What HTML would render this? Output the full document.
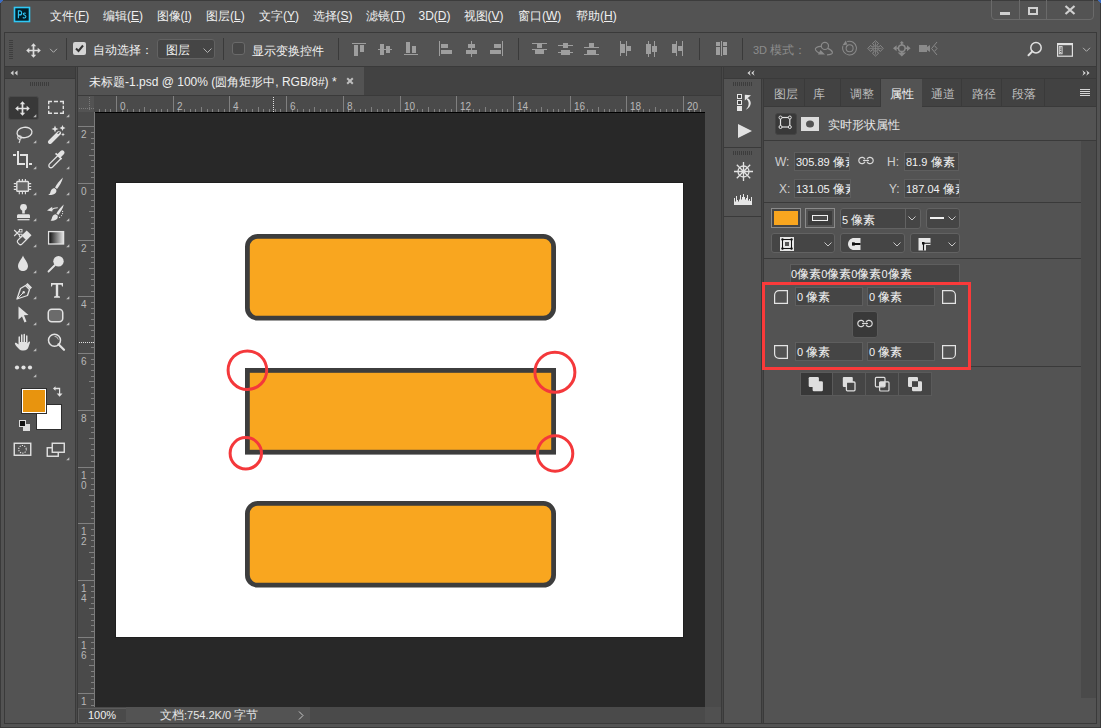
<!DOCTYPE html><html><head><meta charset="utf-8"><style>
html,body{margin:0;padding:0;width:1101px;height:728px;overflow:hidden;background:#535353;}
body{position:relative;font-family:"Liberation Sans",sans-serif;font-size:12px;color:#e6e6e6;}
.t{position:absolute;white-space:nowrap;line-height:14px;}
u{text-decoration:underline;text-underline-offset:1px;}
</style></head><body>
<div style="position:absolute;left:0px;top:0px;width:1101px;height:728px;background:#535353;"></div>
<div style="position:absolute;left:0px;top:0px;width:1px;height:728px;background:#3a3a3a;"></div>
<div style="position:absolute;left:1100px;top:0px;width:1px;height:728px;background:#3a3a3a;"></div>
<div style="position:absolute;left:0px;top:727px;width:1101px;height:1px;background:#3a3a3a;"></div>
<div style="position:absolute;left:0px;top:0px;width:1101px;height:1px;background:#3c3c3c;"></div>
<div style="position:absolute;left:0px;top:0px;width:3px;height:1px;background:#3b6cc2;"></div>
<div style="position:absolute;left:0px;top:1px;width:2px;height:1px;background:#3b6cc2;"></div>
<div style="position:absolute;left:0px;top:2px;width:1px;height:1px;background:#3b6cc2;"></div>
<div style="position:absolute;left:1098px;top:0px;width:3px;height:1px;background:#3b6cc2;"></div>
<div style="position:absolute;left:1099px;top:1px;width:2px;height:1px;background:#3b6cc2;"></div>
<div style="position:absolute;left:1100px;top:2px;width:1px;height:1px;background:#3b6cc2;"></div>
<div style="position:absolute;left:4px;top:32px;width:1093px;height:1px;background:#3a3a3a;"></div>
<div style="position:absolute;left:4px;top:32px;width:1px;height:34px;background:#3a3a3a;"></div>
<div style="position:absolute;left:1096px;top:32px;width:1px;height:34px;background:#3a3a3a;"></div>
<div style="position:absolute;left:4px;top:66px;width:1093px;height:1px;background:#3a3a3a;"></div>
<svg style="position:absolute;left:13px;top:6px;" width="18" height="17" viewBox="0 0 18 17"><rect x="1.5" y="1.5" width="15" height="14" fill="#001e28" stroke="#2fc8f6" stroke-width="1.6"/><path d="M5.4 12.2 V4.9 H6.9 C8.2 4.9 8.7 5.8 8.7 6.9 C8.7 8.1 8 8.9 6.8 8.9 H5.4" fill="none" stroke="#2fc8f6" stroke-width="1.1"/><path d="M12.8 7.3 C12.4 7 12 6.9 11.5 6.9 C10.7 6.9 10.3 7.3 10.3 7.9 C10.3 9 12.9 9 12.9 10.5 C12.9 11.5 12.1 12 11.3 12 C10.7 12 10.2 11.8 9.8 11.5" fill="none" stroke="#2fc8f6" stroke-width="1.05"/></svg>
<div class="t" style="left:50px;top:9px;color:#f0f0f0;">文件(<u>F</u>)</div>
<div class="t" style="left:103px;top:9px;color:#f0f0f0;">编辑(<u>E</u>)</div>
<div class="t" style="left:156.5px;top:9px;color:#f0f0f0;">图像(<u>I</u>)</div>
<div class="t" style="left:206px;top:9px;color:#f0f0f0;">图层(<u>L</u>)</div>
<div class="t" style="left:259px;top:9px;color:#f0f0f0;">文字(<u>Y</u>)</div>
<div class="t" style="left:312.5px;top:9px;color:#f0f0f0;">选择(<u>S</u>)</div>
<div class="t" style="left:366px;top:9px;color:#f0f0f0;">滤镜(<u>T</u>)</div>
<div class="t" style="left:418.5px;top:9px;color:#f0f0f0;">3D(<u>D</u>)</div>
<div class="t" style="left:463.5px;top:9px;color:#f0f0f0;">视图(<u>V</u>)</div>
<div class="t" style="left:518px;top:9px;color:#f0f0f0;">窗口(<u>W</u>)</div>
<div class="t" style="left:576px;top:9px;color:#f0f0f0;">帮助(<u>H</u>)</div>
<div style="position:absolute;left:991px;top:-4px;width:103px;height:24px;border:1px solid #6a6a6a;border-radius:4px;box-sizing:border-box;"></div>
<div style="position:absolute;left:1019px;top:0px;width:1px;height:20px;background:#6a6a6a;"></div>
<div style="position:absolute;left:1046px;top:0px;width:1px;height:20px;background:#6a6a6a;"></div>
<div style="position:absolute;left:1000px;top:12px;width:10px;height:3px;background:#d0d0d0;"></div>
<div style="position:absolute;left:1028px;top:7px;width:10px;height:8px;border:2px solid #d0d0d0;box-sizing:border-box;"></div>
<svg style="position:absolute;left:1064px;top:5px;" width="12" height="10" viewBox="0 0 12 10"><path d="M1.5 1 L10.5 9 M10.5 1 L1.5 9" stroke="#d0d0d0" stroke-width="2.2"/></svg>
<div style="position:absolute;left:9px;top:40px;width:4px;height:1px;background:#3e3e3e;"></div>
<div style="position:absolute;left:9px;top:42px;width:4px;height:1px;background:#3e3e3e;"></div>
<div style="position:absolute;left:9px;top:44px;width:4px;height:1px;background:#3e3e3e;"></div>
<div style="position:absolute;left:9px;top:46px;width:4px;height:1px;background:#3e3e3e;"></div>
<div style="position:absolute;left:9px;top:48px;width:4px;height:1px;background:#3e3e3e;"></div>
<div style="position:absolute;left:9px;top:50px;width:4px;height:1px;background:#3e3e3e;"></div>
<div style="position:absolute;left:9px;top:52px;width:4px;height:1px;background:#3e3e3e;"></div>
<div style="position:absolute;left:9px;top:54px;width:4px;height:1px;background:#3e3e3e;"></div>
<div style="position:absolute;left:9px;top:56px;width:4px;height:1px;background:#3e3e3e;"></div>
<div style="position:absolute;left:9px;top:58px;width:4px;height:1px;background:#3e3e3e;"></div>
<svg style="position:absolute;left:26px;top:43px;" width="15" height="15" viewBox="0 0 15 15"><path d="M7.5 2.5 V12.5 M2.5 7.5 H12.5" stroke="#dcdcdc" stroke-width="1.7"/><path d="M7.5 0.2 L10.2 3.3 L4.8 3.3 Z M7.5 14.8 L10.2 11.7 L4.8 11.7 Z M0.2 7.5 L3.3 4.8 L3.3 10.2 Z M14.8 7.5 L11.7 4.8 L11.7 10.2 Z" fill="#dcdcdc"/></svg>
<svg style="position:absolute;left:49px;top:48px;" width="9" height="6" viewBox="0 0 9 6"><path d="M1 0.8 L4.5 4.3 L8 0.8" fill="none" stroke="#b0b0b0" stroke-width="1"/></svg>
<div style="position:absolute;left:66px;top:38px;width:1px;height:22px;background:#3a3a3a;"></div>
<div style="position:absolute;left:73px;top:42px;width:13px;height:13px;background:#d4d4d4;border-radius:2px;"></div>
<svg style="position:absolute;left:73px;top:42px;" width="13" height="13" viewBox="0 0 13 13"><path d="M3 6.5 L5.5 9 L10 3.5" fill="none" stroke="#333" stroke-width="2"/></svg>
<div class="t" style="left:93px;top:43px;color:#f0f0f0;">自动选择：</div>
<div style="position:absolute;left:157px;top:39px;width:58px;height:20px;background:#454545;border:1px solid #626262;border-radius:3px;box-sizing:border-box;"></div>
<div class="t" style="left:166px;top:43px;color:#f0f0f0;">图层</div>
<svg style="position:absolute;left:203px;top:48px;" width="9" height="6" viewBox="0 0 9 6"><path d="M0.5 0.5 L4.5 4.5 L8.5 0.5" fill="none" stroke="#b0b0b0" stroke-width="1"/></svg>
<div style="position:absolute;left:223px;top:38px;width:1px;height:22px;background:#3a3a3a;"></div>
<div style="position:absolute;left:232px;top:42px;width:13px;height:13px;border:1px solid #6a6a6a;background:#474747;border-radius:3px;box-sizing:border-box;"></div>
<div class="t" style="left:252px;top:44px;color:#f0f0f0;">显示变换控件</div>
<div style="position:absolute;left:338px;top:38px;width:1px;height:22px;background:#3a3a3a;"></div>
<svg style="position:absolute;left:0;top:0" width="1101" height="70"><rect x="352" y="43" width="14" height="1" fill="#9e9e9e"/><rect x="354" y="45" width="4" height="11" fill="#9e9e9e"/><rect x="360" y="45" width="4" height="7" fill="#9e9e9e"/><rect x="378" y="49" width="14" height="1" fill="#9e9e9e"/><rect x="380" y="44" width="4" height="11" fill="#9e9e9e"/><rect x="386" y="46" width="4" height="7" fill="#9e9e9e"/><rect x="404" y="54" width="14" height="1" fill="#9e9e9e"/><rect x="406" y="42" width="4" height="11" fill="#9e9e9e"/><rect x="412" y="46" width="4" height="7" fill="#9e9e9e"/><rect x="439" y="41" width="1" height="15" fill="#9e9e9e"/><rect x="441" y="44" width="7" height="4" fill="#9e9e9e"/><rect x="441" y="50" width="11" height="4" fill="#9e9e9e"/><rect x="471" y="41" width="1" height="16" fill="#9e9e9e"/><rect x="468" y="44" width="7" height="4" fill="#9e9e9e"/><rect x="466" y="50" width="11" height="4" fill="#9e9e9e"/><rect x="502" y="41" width="1" height="15" fill="#9e9e9e"/><rect x="494" y="44" width="7" height="4" fill="#9e9e9e"/><rect x="490" y="50" width="11" height="4" fill="#9e9e9e"/><rect x="518" y="38" width="1" height="22" fill="#3a3a3a"/><rect x="532" y="43" width="15" height="1" fill="#9e9e9e"/><rect x="537" y="44" width="5" height="4" fill="#9e9e9e"/><rect x="532" y="49" width="15" height="1" fill="#9e9e9e"/><rect x="535" y="50" width="9" height="4" fill="#9e9e9e"/><rect x="558" y="45" width="15" height="1" fill="#9e9e9e"/><rect x="563" y="43" width="5" height="5" fill="#9e9e9e"/><rect x="558" y="52" width="15" height="1" fill="#9e9e9e"/><rect x="561" y="50" width="9" height="5" fill="#9e9e9e"/><rect x="589" y="43" width="5" height="4" fill="#9e9e9e"/><rect x="584" y="47" width="15" height="1" fill="#9e9e9e"/><rect x="587" y="50" width="9" height="4" fill="#9e9e9e"/><rect x="584" y="54" width="15" height="1" fill="#9e9e9e"/><rect x="620" y="41" width="1" height="15" fill="#9e9e9e"/><rect x="621" y="44" width="4" height="9" fill="#9e9e9e"/><rect x="626" y="41" width="1" height="15" fill="#9e9e9e"/><rect x="627" y="46" width="4" height="5" fill="#9e9e9e"/><rect x="646" y="44" width="5" height="10" fill="#9e9e9e"/><rect x="648" y="41" width="1" height="16" fill="#9e9e9e"/><rect x="652" y="46" width="5" height="6" fill="#9e9e9e"/><rect x="654" y="41" width="1" height="16" fill="#9e9e9e"/><rect x="672" y="44" width="4" height="9" fill="#9e9e9e"/><rect x="676" y="41" width="1" height="15" fill="#9e9e9e"/><rect x="678" y="46" width="4" height="5" fill="#9e9e9e"/><rect x="682" y="41" width="1" height="15" fill="#9e9e9e"/><rect x="699" y="38" width="1" height="22" fill="#3a3a3a"/><rect x="716" y="42" width="4" height="4" fill="#9e9e9e"/><rect x="716" y="47" width="4" height="8" fill="#9e9e9e"/><rect x="721" y="41" width="1" height="15" fill="#9e9e9e"/><rect x="723" y="42" width="4" height="4" fill="#9e9e9e"/><rect x="723" y="47" width="4" height="8" fill="#9e9e9e"/></svg>
<div style="position:absolute;left:742px;top:38px;width:1px;height:22px;background:#3a3a3a;"></div>
<div class="t" style="left:753px;top:43px;color:#8c8c8c;"><span style="font-size:11px">3D</span> 模式：</div>
<svg style="position:absolute;left:814px;top:40px;" width="20" height="17" viewBox="0 0 20 17"><circle cx="10.9" cy="5.9" r="3.6" fill="none" stroke="#8a8a8a" stroke-width="1.2"/><path d="M7.2 6.3 C3 6.3 0.6 8 1.6 10 C2.3 11.3 3.5 12.3 5 13" fill="none" stroke="#8a8a8a" stroke-width="1.2"/><path d="M4 14.5 L11 14.5 L6.5 10 Z" fill="#8a8a8a"/><path d="M13 14.8 C16 14.8 19 14 18.4 12.2 C17.8 10.5 16 9 13.6 8.3" fill="none" stroke="#8a8a8a" stroke-width="1.2"/></svg>
<svg style="position:absolute;left:841px;top:40px;" width="17" height="18" viewBox="0 0 17 18"><circle cx="8.6" cy="8.3" r="3.5" fill="none" stroke="#8a8a8a" stroke-width="1.05"/><path d="M6.2 1.6 A6.9 6.9 0 1 1 1.9 6.2" fill="none" stroke="#8a8a8a" stroke-width="1.05"/><path d="M1.4 5.4 L6.2 4.6 L4.9 0.6 Z" fill="#8a8a8a"/></svg>
<svg style="position:absolute;left:866px;top:40px;" width="19" height="17" viewBox="0 0 19 17"><path d="M8.05 4.90 L6.40 3.60 L9.50 0.70 L12.60 3.60 L10.95 4.90 L10.95 6.95 L13.00 6.95 L14.30 5.30 L17.20 8.40 L14.30 11.50 L13.00 9.85 L10.95 9.85 L10.95 11.90 L12.60 13.20 L9.50 16.10 L6.40 13.20 L8.05 11.90 L8.05 9.85 L6.00 9.85 L4.70 11.50 L1.80 8.40 L4.70 5.30 L6.00 6.95 L8.05 6.95 Z" fill="none" stroke="#8a8a8a" stroke-width="0.95"/><path d="M9.5 2.3 V14.5 M3.4 8.4 H15.6" stroke="#8a8a8a" stroke-width="0.75"/></svg>
<svg style="position:absolute;left:892px;top:40px;" width="20" height="17" viewBox="0 0 20 17"><circle cx="9.8" cy="8.2" r="3.3" fill="none" stroke="#8a8a8a" stroke-width="1.5"/><path d="M9.8 1 L12 3.2 L7.6 3.2 Z M9.8 16.5 L14 12.5 L5.6 12.5 Z M1 8.2 L4.6 5.2 L4.6 11.2 Z M18.6 8.2 L15 5.2 L15 11.2 Z" fill="#8a8a8a"/><path d="M9.8 3 V5 M9.8 11.4 V13 M4.5 8.2 H6.5 M13.1 8.2 H15" stroke="#8a8a8a" stroke-width="1.6"/></svg>
<svg style="position:absolute;left:918px;top:41px;" width="20" height="16" viewBox="0 0 20 16"><rect x="1" y="4" width="8" height="7" fill="#8a8a8a"/><path d="M9 6 L12 4 L12 11 L9 9 Z" fill="#8a8a8a"/><path d="M19 1 L13.6 7.5 L19 14 M16.6 4.8 L19 7.5 L16.6 10.2" fill="none" stroke="#8a8a8a" stroke-width="1"/></svg>
<svg style="position:absolute;left:1026px;top:40px;" width="18" height="18" viewBox="0 0 18 18"><circle cx="10" cy="7.7" r="5.2" fill="none" stroke="#e0e0e0" stroke-width="1.5"/><path d="M6.3 11.4 L2.5 15.2" stroke="#e0e0e0" stroke-width="2" stroke-linecap="round"/></svg>
<svg style="position:absolute;left:1056px;top:42px;" width="18" height="16" viewBox="0 0 18 16"><rect x="1.6" y="1.6" width="14.8" height="12.6" fill="none" stroke="#e0e0e0" stroke-width="1.2"/><rect x="1" y="1" width="16" height="2.2" fill="#e0e0e0"/><rect x="3.3" y="4.6" width="2.8" height="7.2" fill="none" stroke="#e0e0e0" stroke-width="0.9"/><circle cx="4.7" cy="6" r="0.7" fill="#e0e0e0"/><circle cx="4.7" cy="8.2" r="0.7" fill="#e0e0e0"/><circle cx="4.7" cy="10.4" r="0.7" fill="#e0e0e0"/></svg>
<svg style="position:absolute;left:1082px;top:47px;" width="9" height="6" viewBox="0 0 9 6"><path d="M1 0.8 L4.5 4.3 L8 0.8" fill="none" stroke="#b0b0b0" stroke-width="1"/></svg>
<div style="position:absolute;left:4px;top:66px;width:72px;height:658px;background:#3a3a3a;"></div>
<div style="position:absolute;left:5px;top:67px;width:70px;height:11px;background:#424242;"></div>
<div style="position:absolute;left:5px;top:79px;width:70px;height:644px;background:#535353;"></div>
<svg style="position:absolute;left:10px;top:70px;" width="8" height="6" viewBox="0 0 8 6"><path d="M3.5 0.5 L0.5 3 L3.5 5.5 Z M7.5 0.5 L4.5 3 L7.5 5.5 Z" fill="#cfcfcf"/></svg>
<div style="position:absolute;left:30px;top:82px;width:1px;height:4px;background:#3c3c3c;"></div>
<div style="position:absolute;left:32px;top:82px;width:1px;height:4px;background:#3c3c3c;"></div>
<div style="position:absolute;left:34px;top:82px;width:1px;height:4px;background:#3c3c3c;"></div>
<div style="position:absolute;left:36px;top:82px;width:1px;height:4px;background:#3c3c3c;"></div>
<div style="position:absolute;left:38px;top:82px;width:1px;height:4px;background:#3c3c3c;"></div>
<div style="position:absolute;left:40px;top:82px;width:1px;height:4px;background:#3c3c3c;"></div>
<div style="position:absolute;left:42px;top:82px;width:1px;height:4px;background:#3c3c3c;"></div>
<div style="position:absolute;left:44px;top:82px;width:1px;height:4px;background:#3c3c3c;"></div>
<div style="position:absolute;left:46px;top:82px;width:1px;height:4px;background:#3c3c3c;"></div>
<div style="position:absolute;left:48px;top:82px;width:1px;height:4px;background:#3c3c3c;"></div>
<div style="position:absolute;left:8px;top:96px;width:31px;height:24px;background:#383838;border:1px solid #4a4a4a;border-radius:3px;box-sizing:border-box;"></div>
<svg style="position:absolute;left:15px;top:101px;" width="15" height="15" viewBox="0 0 15 15"><path d="M7.5 2.5 V12.5 M2.5 7.5 H12.5" stroke="#e2e2e2" stroke-width="1.7"/><path d="M7.5 0.2 L10.2 3.3 L4.8 3.3 Z M7.5 14.8 L10.2 11.7 L4.8 11.7 Z M0.2 7.5 L3.3 4.8 L3.3 10.2 Z M14.8 7.5 L11.7 4.8 L11.7 10.2 Z" fill="#e2e2e2"/></svg>
<svg style="position:absolute;left:33px;top:114px;" width="4" height="4" viewBox="0 0 4 4"><path d="M3.3 0.2 L3.3 3.3 L0.2 3.3 Z" fill="#bcbcbc"/></svg>
<svg style="position:absolute;left:66px;top:114px;" width="4" height="4" viewBox="0 0 4 4"><path d="M3.3 0.2 L3.3 3.3 L0.2 3.3 Z" fill="#bcbcbc"/></svg>
<svg style="position:absolute;left:33px;top:140px;" width="4" height="4" viewBox="0 0 4 4"><path d="M3.3 0.2 L3.3 3.3 L0.2 3.3 Z" fill="#bcbcbc"/></svg>
<svg style="position:absolute;left:66px;top:140px;" width="4" height="4" viewBox="0 0 4 4"><path d="M3.3 0.2 L3.3 3.3 L0.2 3.3 Z" fill="#bcbcbc"/></svg>
<svg style="position:absolute;left:33px;top:166px;" width="4" height="4" viewBox="0 0 4 4"><path d="M3.3 0.2 L3.3 3.3 L0.2 3.3 Z" fill="#bcbcbc"/></svg>
<svg style="position:absolute;left:66px;top:166px;" width="4" height="4" viewBox="0 0 4 4"><path d="M3.3 0.2 L3.3 3.3 L0.2 3.3 Z" fill="#bcbcbc"/></svg>
<svg style="position:absolute;left:33px;top:192px;" width="4" height="4" viewBox="0 0 4 4"><path d="M3.3 0.2 L3.3 3.3 L0.2 3.3 Z" fill="#bcbcbc"/></svg>
<svg style="position:absolute;left:66px;top:192px;" width="4" height="4" viewBox="0 0 4 4"><path d="M3.3 0.2 L3.3 3.3 L0.2 3.3 Z" fill="#bcbcbc"/></svg>
<svg style="position:absolute;left:33px;top:218px;" width="4" height="4" viewBox="0 0 4 4"><path d="M3.3 0.2 L3.3 3.3 L0.2 3.3 Z" fill="#bcbcbc"/></svg>
<svg style="position:absolute;left:66px;top:218px;" width="4" height="4" viewBox="0 0 4 4"><path d="M3.3 0.2 L3.3 3.3 L0.2 3.3 Z" fill="#bcbcbc"/></svg>
<svg style="position:absolute;left:33px;top:244px;" width="4" height="4" viewBox="0 0 4 4"><path d="M3.3 0.2 L3.3 3.3 L0.2 3.3 Z" fill="#bcbcbc"/></svg>
<svg style="position:absolute;left:66px;top:244px;" width="4" height="4" viewBox="0 0 4 4"><path d="M3.3 0.2 L3.3 3.3 L0.2 3.3 Z" fill="#bcbcbc"/></svg>
<svg style="position:absolute;left:33px;top:270px;" width="4" height="4" viewBox="0 0 4 4"><path d="M3.3 0.2 L3.3 3.3 L0.2 3.3 Z" fill="#bcbcbc"/></svg>
<svg style="position:absolute;left:66px;top:270px;" width="4" height="4" viewBox="0 0 4 4"><path d="M3.3 0.2 L3.3 3.3 L0.2 3.3 Z" fill="#bcbcbc"/></svg>
<svg style="position:absolute;left:33px;top:296px;" width="4" height="4" viewBox="0 0 4 4"><path d="M3.3 0.2 L3.3 3.3 L0.2 3.3 Z" fill="#bcbcbc"/></svg>
<svg style="position:absolute;left:66px;top:296px;" width="4" height="4" viewBox="0 0 4 4"><path d="M3.3 0.2 L3.3 3.3 L0.2 3.3 Z" fill="#bcbcbc"/></svg>
<svg style="position:absolute;left:33px;top:322px;" width="4" height="4" viewBox="0 0 4 4"><path d="M3.3 0.2 L3.3 3.3 L0.2 3.3 Z" fill="#bcbcbc"/></svg>
<svg style="position:absolute;left:66px;top:322px;" width="4" height="4" viewBox="0 0 4 4"><path d="M3.3 0.2 L3.3 3.3 L0.2 3.3 Z" fill="#bcbcbc"/></svg>
<svg style="position:absolute;left:33px;top:348px;" width="4" height="4" viewBox="0 0 4 4"><path d="M3.3 0.2 L3.3 3.3 L0.2 3.3 Z" fill="#bcbcbc"/></svg>
<svg style="position:absolute;left:33px;top:374px;" width="4" height="4" viewBox="0 0 4 4"><path d="M3.3 0.2 L3.3 3.3 L0.2 3.3 Z" fill="#bcbcbc"/></svg>
<svg style="position:absolute;left:66px;top:457px;" width="4" height="4" viewBox="0 0 4 4"><path d="M3.3 0.2 L3.3 3.3 L0.2 3.3 Z" fill="#bcbcbc"/></svg>
<svg style="position:absolute;left:0;top:0" width="80" height="130"><path d="M48.7 104.2 V101.5 H52 M53.9 101.5 H58 M59.9 101.5 H63.3 V104.2 M63.3 105.8 V109 M63.3 110.7 V113.3 H59.9 M58 113.3 H53.9 M52 113.3 H48.7 V110.7 M48.7 109 V105.8" fill="none" stroke="#e2e2e2" stroke-width="1.4"/></svg>
<svg style="position:absolute;left:15px;top:126px;" width="18" height="18" viewBox="0 0 18 18"><ellipse cx="9.5" cy="6.5" rx="7.5" ry="5.2" fill="none" stroke="#e2e2e2" stroke-width="1.3" transform="rotate(-8 9.5 6.5)"/><circle cx="4.5" cy="11.5" r="1.8" fill="none" stroke="#e2e2e2" stroke-width="1.1"/><path d="M4.8 13 C5.5 14.5 4.5 16 4 17" fill="none" stroke="#e2e2e2" stroke-width="1.1"/></svg>
<svg style="position:absolute;left:47px;top:124px;" width="20" height="20" viewBox="0 0 20 20"><path d="M3 18 L12 9" stroke="#e2e2e2" stroke-width="4" stroke-linecap="round"/><path d="M11 9.5 L12.3 8.2" stroke="#535353" stroke-width="1.1" stroke-linecap="round"/><path d="M8 1.5 L9 4 L11.5 5 L9 6 L8 8.5 L7 6 L4.5 5 L7 4 Z M15.5 1 L16.4 3.1 L18.5 4 L16.4 4.9 L15.5 7 L14.6 4.9 L12.5 4 L14.6 3.1 Z M16 8.5 L16.6 10 L18 10.5 L16.6 11 L16 12.5 L15.4 11 L14 10.5 L15.4 10 Z" fill="#e2e2e2"/></svg>
<svg style="position:absolute;left:0;top:0" width="40" height="170"><g fill="#e2e2e2"><rect x="13" y="154" width="3" height="2"/><rect x="17" y="151" width="2" height="14"/><rect x="17" y="163" width="8" height="2"/><rect x="20" y="154" width="8" height="2"/><rect x="26" y="154" width="2" height="14"/><rect x="29" y="163" width="3" height="2"/></g></svg>
<svg style="position:absolute;left:47px;top:150px;" width="19" height="19" viewBox="0 0 19 19"><path d="M11.2 5.2 L2.5 13.9 C1.6 14.8 1.8 16.6 2.5 17.2 C3.3 17.9 4.7 17.8 5.6 17 L14.3 8.3" fill="none" stroke="#e2e2e2" stroke-width="1.3"/><path d="M9.5 5.3 L14 9.8 L15.2 8.6 L13.8 7.2 L16.6 4.4 C17.8 3.2 17.8 1.9 16.8 0.9 C15.8 -0.1 14.5 0 13.3 1.2 L10.5 4 L9.2 2.7 L7.9 4 Z" fill="#e2e2e2"/></svg>
<svg style="position:absolute;left:0;top:0" width="40" height="200"><rect x="16.8" y="181.5" width="11.6" height="9.8" rx="0.8" fill="#666" stroke="#e2e2e2" stroke-width="1.4"/><path d="M19.3 179 V181 M22.4 179 V181 M25.4 179 V181 M19.3 192 V194.3 M22.4 192 V194.3 M25.4 192 V194.3 M13.8 183.6 H16.2 M13.8 186.5 H16.2 M13.8 189.4 H16.2 M29 183.6 H31.2 M29 186.5 H31.2 M29 189.4 H31.2" stroke="#e2e2e2" stroke-width="1.1"/></svg>
<svg style="position:absolute;left:47px;top:177px;" width="18" height="19" viewBox="0 0 18 19"><path d="M16 0.5 C13 3 9.5 7.5 8 10.5 L10 12 C12 9.5 15 5 16 0.5 Z" fill="#e2e2e2"/><path d="M7.2 11 C4.5 11.5 3.8 13.5 3.3 15.5 C3 16.8 2 17.6 1.2 18 C4 18.3 7.5 17.5 9 15.5 C9.6 14.5 9.5 13 9 12.3 Z" fill="#e2e2e2"/></svg>
<svg style="position:absolute;left:0;top:0" width="40" height="225"><circle cx="23.5" cy="207.3" r="3.4" fill="#e2e2e2"/><rect x="22.2" y="209" width="2.6" height="4.5" fill="#e2e2e2"/><path d="M17 218 V215.8 C17 214.9 17.6 214.3 18.5 214.3 H28.5 C29.4 214.3 30 214.9 30 215.8 V218 Z" fill="#e2e2e2"/><rect x="17.5" y="219.1" width="12" height="1.2" fill="#e2e2e2"/></svg>
<svg style="position:absolute;left:0;top:0" width="70" height="225"><g fill="#e2e2e2"><path d="M63.8 204.6 C61 207 58 210.6 56.4 213.6 L58.3 215 C60.3 212.4 63 208.6 63.8 204.6 Z"/><path d="M55.6 214.2 C53 214.6 52.3 216.6 51.8 218.4 C51.5 219.6 50.7 220.3 50 220.6 C52.6 221 56 220.2 57.4 218.4 C58 217.5 57.9 216 57.4 215.3 Z"/><path d="M47 210.6 L52.2 206.8 L52.4 211.4 Z"/><path d="M51 209.6 C53 208 55 207.4 57.8 207.3 L57.8 208.3 C55.2 208.4 53.4 209 51.8 210.4 Z"/><circle cx="62.6" cy="211.4" r="0.6"/><circle cx="62.5" cy="213.6" r="0.6"/><circle cx="61.5" cy="215.6" r="0.6"/><circle cx="59.6" cy="217.4" r="0.6"/></g></svg>
<svg style="position:absolute;left:0;top:0" width="70" height="250"><g transform="translate(23.6 238.4) rotate(45)"><path d="M-3.4 -0.6 V-7.8 H3.4 V-0.6 Z" fill="#e2e2e2"/><path d="M-2.8 -0.6 V5.2 A2 2 0 0 0 -0.8 7.2 H0.8 A2 2 0 0 0 2.8 5.2 V-0.6" fill="none" stroke="#e2e2e2" stroke-width="1.2"/></g><path d="M14.2 230 L19.2 235 M14.2 236 L19.2 231" stroke="#e2e2e2" stroke-width="1.1"/><rect x="19.4" y="229.4" width="2.6" height="2.6" fill="none" stroke="#e2e2e2" stroke-width="0.9"/><rect x="19.4" y="234.2" width="2.6" height="2.6" fill="none" stroke="#e2e2e2" stroke-width="0.9"/></svg>
<svg style="position:absolute;left:47px;top:230px" width="18" height="16"><defs><linearGradient id="gr" x1="0" y1="0" x2="1" y2="0"><stop offset="0" stop-color="#0a0a0a"/><stop offset="1" stop-color="#e6e6e6"/></linearGradient></defs><rect x="1.6" y="1.6" width="15" height="12.4" fill="url(#gr)" stroke="#e2e2e2" stroke-width="1.3"/></svg>
<svg style="position:absolute;left:17px;top:255px;" width="12" height="17" viewBox="0 0 12 17"><path d="M6 0.5 C5 3.5 1 7.5 1 11 C1 14 3.3 16 6 16 C8.7 16 11 14 11 11 C11 7.5 7 3.5 6 0.5 Z" fill="#e2e2e2"/></svg>
<svg style="position:absolute;left:47px;top:255px;" width="18" height="18" viewBox="0 0 18 18"><circle cx="11.5" cy="6.3" r="5.2" fill="#e2e2e2"/><path d="M8 10 L1.5 16.5" stroke="#e2e2e2" stroke-width="1.8" stroke-linecap="round"/></svg>
<svg style="position:absolute;left:15px;top:282px;" width="18" height="18" viewBox="0 0 18 18"><path d="M12.5 1 L17 5.5 L15.2 7.3 L10.7 2.8 Z" fill="#e2e2e2"/><path d="M10.5 3.5 L14.5 7.5 L12.5 13.5 L2 17 L5.5 6.5 Z" fill="none" stroke="#e2e2e2" stroke-width="1.3" stroke-linejoin="round"/><path d="M2.3 16.7 L8 11" stroke="#e2e2e2" stroke-width="1"/><circle cx="8.7" cy="10.3" r="1.2" fill="#e2e2e2"/></svg>
<svg style="position:absolute;left:50px;top:282px;" width="15" height="17" viewBox="0 0 15 17"><path d="M1 1 H13 V4.5 H12 L11.5 2.8 H8.2 V14 L10 14.5 V15.8 H4 V14.5 L5.8 14 V2.8 H2.5 L2 4.5 H1 Z" fill="#e2e2e2"/></svg>
<svg style="position:absolute;left:17px;top:306px;" width="13" height="18" viewBox="0 0 13 18"><path d="M1.5 0.5 L11.5 9 L7 9.2 L9.5 15.5 L7.5 16.5 L5 10.5 L1.5 13.5 Z" fill="#e2e2e2"/></svg>
<svg style="position:absolute;left:47px;top:308px;" width="18" height="16" viewBox="0 0 18 16"><rect x="1.25" y="1.25" width="14.5" height="12.5" rx="3.5" fill="#6b6b6b" stroke="#e2e2e2" stroke-width="1.5"/></svg>
<svg style="position:absolute;left:14px;top:333px;" width="19" height="19" viewBox="0 0 19 19"><path d="M5 16 C3.5 14.5 1.5 12.5 1 11 C0.6 10 1.5 9.3 2.5 10 L4.5 11.5 L4.5 4 C4.5 3 6 3 6 4 L6 9 L7 9 L7 2 C7 1 8.5 1 8.5 2 L8.5 9 L9.5 9 L9.5 1.5 C9.5 0.5 11 0.5 11 1.5 L11 9 L12 9 L12 3 C12 2 13.5 2 13.5 3 L13.5 10.5 L14.5 9 C15 8 16.3 8.3 16 9.5 L14.5 14 C13.8 16 12.5 17.5 9.5 17.5 C7.5 17.5 6 17 5 16 Z" fill="#e2e2e2"/></svg>
<svg style="position:absolute;left:47px;top:333px;" width="19" height="19" viewBox="0 0 19 19"><circle cx="7.5" cy="7.3" r="6" fill="none" stroke="#e2e2e2" stroke-width="1.5"/><path d="M11.5 11.3 L17 16.8" stroke="#e2e2e2" stroke-width="2.2" stroke-linecap="round"/><path d="M7.5 3.3 A4 4 0 0 1 11.3 6.5" fill="none" stroke="#e2e2e2" stroke-width="0.8"/></svg>
<svg style="position:absolute;left:14px;top:364px;" width="19" height="7" viewBox="0 0 19 7"><circle cx="3" cy="3.5" r="2.1" fill="#e2e2e2"/><circle cx="9.5" cy="3.5" r="2.1" fill="#e2e2e2"/><circle cx="16" cy="3.5" r="2.1" fill="#e2e2e2"/></svg>
<div style="position:absolute;left:36px;top:404px;width:26px;height:26px;background:#2e2e2e;"></div>
<div style="position:absolute;left:37px;top:405px;width:24px;height:24px;background:#ffffff;"></div>
<div style="position:absolute;left:21px;top:388px;width:26px;height:26px;background:#2e2e2e;"></div>
<div style="position:absolute;left:22px;top:389px;width:24px;height:24px;background:#ffffff;"></div>
<div style="position:absolute;left:23px;top:390px;width:22px;height:22px;background:#e8940e;"></div>
<svg style="position:absolute;left:52px;top:386px;" width="12" height="12" viewBox="0 0 12 12"><path d="M1 2.5 L3.5 0.3 L3.5 1.8 L8.2 1.8 L8.2 7.5 L10.5 7.5 L7.6 10.8 L4.7 7.5 L7 7.5 L7 3.2 L3.5 3.2 L3.5 4.7 Z" fill="#e2e2e2"/></svg>
<div style="position:absolute;left:23px;top:424px;width:7px;height:7px;background:#dcdcdc;"></div>
<div style="position:absolute;left:19px;top:420px;width:7px;height:7px;background:#dcdcdc;"></div>
<div style="position:absolute;left:20px;top:421px;width:5px;height:5px;background:#111;"></div>
<div style="position:absolute;left:25px;top:426px;width:4px;height:4px;background:#dcdcdc;"></div>
<svg style="position:absolute;left:13px;top:442px;" width="19" height="15" viewBox="0 0 19 15"><rect x="1.25" y="1.25" width="16.5" height="12" fill="none" stroke="#e2e2e2" stroke-width="1.4"/><circle cx="9.5" cy="7.3" r="3.8" fill="none" stroke="#e2e2e2" stroke-width="1.1" stroke-dasharray="1.2 1.2"/></svg>
<svg style="position:absolute;left:46px;top:442px;" width="20" height="16" viewBox="0 0 20 16"><rect x="1.25" y="5.75" width="11" height="8.5" fill="#535353" stroke="#e2e2e2" stroke-width="1.4"/><rect x="6.25" y="1.25" width="12" height="9" fill="#535353" stroke="#e2e2e2" stroke-width="1.4"/></svg>
<div style="position:absolute;left:77px;top:66px;width:646px;height:658px;background:#3a3a3a;"></div>
<div style="position:absolute;left:78px;top:67px;width:643px;height:28px;background:#424242;"></div>
<div style="position:absolute;left:78px;top:67px;width:286px;height:28px;background:#535353;"></div>
<div style="position:absolute;left:78px;top:96px;width:643px;height:16px;background:#4a4a4a;"></div>
<div style="position:absolute;left:78px;top:96px;width:16px;height:611px;background:#4a4a4a;"></div>
<div style="position:absolute;left:78px;top:96px;width:16px;height:16px;background:#535353;"></div>
<div style="position:absolute;left:95px;top:112px;width:610px;height:595px;background:#282828;"></div>
<div style="position:absolute;left:95px;top:112px;width:610px;height:1px;background:#000;"></div>
<div style="position:absolute;left:94px;top:112px;width:1px;height:595px;background:#7a7a7a;"></div>
<div style="position:absolute;left:115px;top:182px;width:569px;height:456px;background:#1f1f1f;"></div>
<div style="position:absolute;left:116px;top:183px;width:567px;height:454px;background:#ffffff;"></div>
<div style="position:absolute;left:705px;top:112px;width:16px;height:595px;background:#4a4a4a;"></div>
<div style="position:absolute;left:78px;top:707px;width:643px;height:16px;background:#4a4a4a;"></div>
<div class="t" style="left:89px;top:75px;color:#f0f0f0;">未标题-1.psd @ 100% (圆角矩形中, RGB/8#) *</div>
<svg style="position:absolute;left:346px;top:77px;" width="8" height="8" viewBox="0 0 8 8"><path d="M1.2 1.2 L6.8 6.8 M6.8 1.2 L1.2 6.8" stroke="#bdbdbd" stroke-width="2"/></svg>
<svg style="position:absolute;left:0;top:0" width="721" height="112"><rect x="99" y="109" width="1" height="3" fill="#808080"/><rect x="105" y="109" width="1" height="3" fill="#808080"/><rect x="110" y="109" width="1" height="3" fill="#808080"/><rect x="116" y="96" width="1" height="16" fill="#808080"/><rect x="122" y="109" width="1" height="3" fill="#808080"/><rect x="127" y="109" width="1" height="3" fill="#808080"/><rect x="133" y="109" width="1" height="3" fill="#808080"/><rect x="139" y="109" width="1" height="3" fill="#808080"/><rect x="144" y="107" width="1" height="5" fill="#808080"/><rect x="150" y="109" width="1" height="3" fill="#808080"/><rect x="156" y="109" width="1" height="3" fill="#808080"/><rect x="161" y="109" width="1" height="3" fill="#808080"/><rect x="167" y="109" width="1" height="3" fill="#808080"/><rect x="173" y="96" width="1" height="16" fill="#808080"/><rect x="178" y="109" width="1" height="3" fill="#808080"/><rect x="184" y="109" width="1" height="3" fill="#808080"/><rect x="190" y="109" width="1" height="3" fill="#808080"/><rect x="195" y="109" width="1" height="3" fill="#808080"/><rect x="201" y="107" width="1" height="5" fill="#808080"/><rect x="207" y="109" width="1" height="3" fill="#808080"/><rect x="212" y="109" width="1" height="3" fill="#808080"/><rect x="218" y="109" width="1" height="3" fill="#808080"/><rect x="224" y="109" width="1" height="3" fill="#808080"/><rect x="229" y="96" width="1" height="16" fill="#808080"/><rect x="235" y="109" width="1" height="3" fill="#808080"/><rect x="241" y="109" width="1" height="3" fill="#808080"/><rect x="246" y="109" width="1" height="3" fill="#808080"/><rect x="252" y="109" width="1" height="3" fill="#808080"/><rect x="258" y="107" width="1" height="5" fill="#808080"/><rect x="263" y="109" width="1" height="3" fill="#808080"/><rect x="269" y="109" width="1" height="3" fill="#808080"/><rect x="275" y="109" width="1" height="3" fill="#808080"/><rect x="280" y="109" width="1" height="3" fill="#808080"/><rect x="286" y="96" width="1" height="16" fill="#808080"/><rect x="292" y="109" width="1" height="3" fill="#808080"/><rect x="297" y="109" width="1" height="3" fill="#808080"/><rect x="303" y="109" width="1" height="3" fill="#808080"/><rect x="309" y="109" width="1" height="3" fill="#808080"/><rect x="314" y="107" width="1" height="5" fill="#808080"/><rect x="320" y="109" width="1" height="3" fill="#808080"/><rect x="326" y="109" width="1" height="3" fill="#808080"/><rect x="331" y="109" width="1" height="3" fill="#808080"/><rect x="337" y="109" width="1" height="3" fill="#808080"/><rect x="343" y="96" width="1" height="16" fill="#808080"/><rect x="348" y="109" width="1" height="3" fill="#808080"/><rect x="354" y="109" width="1" height="3" fill="#808080"/><rect x="360" y="109" width="1" height="3" fill="#808080"/><rect x="365" y="109" width="1" height="3" fill="#808080"/><rect x="371" y="107" width="1" height="5" fill="#808080"/><rect x="377" y="109" width="1" height="3" fill="#808080"/><rect x="382" y="109" width="1" height="3" fill="#808080"/><rect x="388" y="109" width="1" height="3" fill="#808080"/><rect x="394" y="109" width="1" height="3" fill="#808080"/><rect x="400" y="96" width="1" height="16" fill="#808080"/><rect x="405" y="109" width="1" height="3" fill="#808080"/><rect x="411" y="109" width="1" height="3" fill="#808080"/><rect x="417" y="109" width="1" height="3" fill="#808080"/><rect x="422" y="109" width="1" height="3" fill="#808080"/><rect x="428" y="107" width="1" height="5" fill="#808080"/><rect x="434" y="109" width="1" height="3" fill="#808080"/><rect x="439" y="109" width="1" height="3" fill="#808080"/><rect x="445" y="109" width="1" height="3" fill="#808080"/><rect x="451" y="109" width="1" height="3" fill="#808080"/><rect x="456" y="96" width="1" height="16" fill="#808080"/><rect x="462" y="109" width="1" height="3" fill="#808080"/><rect x="468" y="109" width="1" height="3" fill="#808080"/><rect x="473" y="109" width="1" height="3" fill="#808080"/><rect x="479" y="109" width="1" height="3" fill="#808080"/><rect x="485" y="107" width="1" height="5" fill="#808080"/><rect x="490" y="109" width="1" height="3" fill="#808080"/><rect x="496" y="109" width="1" height="3" fill="#808080"/><rect x="502" y="109" width="1" height="3" fill="#808080"/><rect x="507" y="109" width="1" height="3" fill="#808080"/><rect x="513" y="96" width="1" height="16" fill="#808080"/><rect x="519" y="109" width="1" height="3" fill="#808080"/><rect x="524" y="109" width="1" height="3" fill="#808080"/><rect x="530" y="109" width="1" height="3" fill="#808080"/><rect x="536" y="109" width="1" height="3" fill="#808080"/><rect x="541" y="107" width="1" height="5" fill="#808080"/><rect x="547" y="109" width="1" height="3" fill="#808080"/><rect x="553" y="109" width="1" height="3" fill="#808080"/><rect x="558" y="109" width="1" height="3" fill="#808080"/><rect x="564" y="109" width="1" height="3" fill="#808080"/><rect x="570" y="96" width="1" height="16" fill="#808080"/><rect x="575" y="109" width="1" height="3" fill="#808080"/><rect x="581" y="109" width="1" height="3" fill="#808080"/><rect x="587" y="109" width="1" height="3" fill="#808080"/><rect x="592" y="109" width="1" height="3" fill="#808080"/><rect x="598" y="107" width="1" height="5" fill="#808080"/><rect x="604" y="109" width="1" height="3" fill="#808080"/><rect x="609" y="109" width="1" height="3" fill="#808080"/><rect x="615" y="109" width="1" height="3" fill="#808080"/><rect x="621" y="109" width="1" height="3" fill="#808080"/><rect x="626" y="96" width="1" height="16" fill="#808080"/><rect x="632" y="109" width="1" height="3" fill="#808080"/><rect x="638" y="109" width="1" height="3" fill="#808080"/><rect x="643" y="109" width="1" height="3" fill="#808080"/><rect x="649" y="109" width="1" height="3" fill="#808080"/><rect x="655" y="107" width="1" height="5" fill="#808080"/><rect x="660" y="109" width="1" height="3" fill="#808080"/><rect x="666" y="109" width="1" height="3" fill="#808080"/><rect x="672" y="109" width="1" height="3" fill="#808080"/><rect x="677" y="109" width="1" height="3" fill="#808080"/><rect x="683" y="96" width="1" height="16" fill="#808080"/><rect x="689" y="109" width="1" height="3" fill="#808080"/><rect x="694" y="109" width="1" height="3" fill="#808080"/><rect x="700" y="109" width="1" height="3" fill="#808080"/></svg>
<div class="t" style="left:120px;top:102px;color:#b8b8b8;font-size:10px;line-height:10px;">0</div>
<div class="t" style="left:177px;top:102px;color:#b8b8b8;font-size:10px;line-height:10px;">2</div>
<div class="t" style="left:233px;top:102px;color:#b8b8b8;font-size:10px;line-height:10px;">4</div>
<div class="t" style="left:290px;top:102px;color:#b8b8b8;font-size:10px;line-height:10px;">6</div>
<div class="t" style="left:347px;top:102px;color:#b8b8b8;font-size:10px;line-height:10px;">8</div>
<div class="t" style="left:404px;top:102px;color:#b8b8b8;font-size:10px;line-height:10px;">10</div>
<div class="t" style="left:460px;top:102px;color:#b8b8b8;font-size:10px;line-height:10px;">12</div>
<div class="t" style="left:517px;top:102px;color:#b8b8b8;font-size:10px;line-height:10px;">14</div>
<div class="t" style="left:574px;top:102px;color:#b8b8b8;font-size:10px;line-height:10px;">16</div>
<div class="t" style="left:630px;top:102px;color:#b8b8b8;font-size:10px;line-height:10px;">18</div>
<div class="t" style="left:687px;top:102px;color:#b8b8b8;font-size:10px;line-height:10px;">20</div>
<div style="position:absolute;left:273px;top:97px;width:1px;height:1px;background:#e0e0e0;"></div>
<div style="position:absolute;left:273px;top:99px;width:1px;height:1px;background:#e0e0e0;"></div>
<div style="position:absolute;left:273px;top:101px;width:1px;height:1px;background:#e0e0e0;"></div>
<div style="position:absolute;left:273px;top:103px;width:1px;height:1px;background:#e0e0e0;"></div>
<div style="position:absolute;left:273px;top:105px;width:1px;height:1px;background:#e0e0e0;"></div>
<div style="position:absolute;left:273px;top:107px;width:1px;height:1px;background:#e0e0e0;"></div>
<div style="position:absolute;left:273px;top:109px;width:1px;height:1px;background:#e0e0e0;"></div>
<div style="position:absolute;left:273px;top:111px;width:1px;height:1px;background:#e0e0e0;"></div>
<div style="position:absolute;left:89px;top:97px;width:1px;height:1px;background:#7a7a7a;"></div>
<div style="position:absolute;left:89px;top:99px;width:1px;height:1px;background:#7a7a7a;"></div>
<div style="position:absolute;left:89px;top:101px;width:1px;height:1px;background:#7a7a7a;"></div>
<div style="position:absolute;left:89px;top:103px;width:1px;height:1px;background:#7a7a7a;"></div>
<div style="position:absolute;left:89px;top:105px;width:1px;height:1px;background:#7a7a7a;"></div>
<div style="position:absolute;left:89px;top:107px;width:1px;height:1px;background:#7a7a7a;"></div>
<div style="position:absolute;left:89px;top:109px;width:1px;height:1px;background:#7a7a7a;"></div>
<div style="position:absolute;left:79px;top:108px;width:1px;height:1px;background:#7a7a7a;"></div>
<div style="position:absolute;left:81px;top:108px;width:1px;height:1px;background:#7a7a7a;"></div>
<div style="position:absolute;left:83px;top:108px;width:1px;height:1px;background:#7a7a7a;"></div>
<div style="position:absolute;left:85px;top:108px;width:1px;height:1px;background:#7a7a7a;"></div>
<div style="position:absolute;left:87px;top:108px;width:1px;height:1px;background:#7a7a7a;"></div>
<div style="position:absolute;left:89px;top:108px;width:1px;height:1px;background:#7a7a7a;"></div>
<div style="position:absolute;left:91px;top:108px;width:1px;height:1px;background:#7a7a7a;"></div>
<div style="position:absolute;left:93px;top:108px;width:1px;height:1px;background:#7a7a7a;"></div>
<svg style="position:absolute;left:0;top:0" width="100" height="710"><rect x="78" y="126" width="16" height="1" fill="#808080"/><rect x="91" y="132" width="3" height="1" fill="#808080"/><rect x="91" y="138" width="3" height="1" fill="#808080"/><rect x="91" y="143" width="3" height="1" fill="#808080"/><rect x="91" y="149" width="3" height="1" fill="#808080"/><rect x="89" y="155" width="5" height="1" fill="#808080"/><rect x="91" y="160" width="3" height="1" fill="#808080"/><rect x="91" y="166" width="3" height="1" fill="#808080"/><rect x="91" y="172" width="3" height="1" fill="#808080"/><rect x="91" y="177" width="3" height="1" fill="#808080"/><rect x="78" y="183" width="16" height="1" fill="#808080"/><rect x="91" y="189" width="3" height="1" fill="#808080"/><rect x="91" y="194" width="3" height="1" fill="#808080"/><rect x="91" y="200" width="3" height="1" fill="#808080"/><rect x="91" y="206" width="3" height="1" fill="#808080"/><rect x="89" y="211" width="5" height="1" fill="#808080"/><rect x="91" y="217" width="3" height="1" fill="#808080"/><rect x="91" y="223" width="3" height="1" fill="#808080"/><rect x="91" y="228" width="3" height="1" fill="#808080"/><rect x="91" y="234" width="3" height="1" fill="#808080"/><rect x="78" y="240" width="16" height="1" fill="#808080"/><rect x="91" y="245" width="3" height="1" fill="#808080"/><rect x="91" y="251" width="3" height="1" fill="#808080"/><rect x="91" y="257" width="3" height="1" fill="#808080"/><rect x="91" y="262" width="3" height="1" fill="#808080"/><rect x="89" y="268" width="5" height="1" fill="#808080"/><rect x="91" y="274" width="3" height="1" fill="#808080"/><rect x="91" y="279" width="3" height="1" fill="#808080"/><rect x="91" y="285" width="3" height="1" fill="#808080"/><rect x="91" y="291" width="3" height="1" fill="#808080"/><rect x="78" y="296" width="16" height="1" fill="#808080"/><rect x="91" y="302" width="3" height="1" fill="#808080"/><rect x="91" y="308" width="3" height="1" fill="#808080"/><rect x="91" y="313" width="3" height="1" fill="#808080"/><rect x="91" y="319" width="3" height="1" fill="#808080"/><rect x="89" y="325" width="5" height="1" fill="#808080"/><rect x="91" y="330" width="3" height="1" fill="#808080"/><rect x="91" y="336" width="3" height="1" fill="#808080"/><rect x="91" y="342" width="3" height="1" fill="#808080"/><rect x="91" y="347" width="3" height="1" fill="#808080"/><rect x="78" y="353" width="16" height="1" fill="#808080"/><rect x="91" y="359" width="3" height="1" fill="#808080"/><rect x="91" y="364" width="3" height="1" fill="#808080"/><rect x="91" y="370" width="3" height="1" fill="#808080"/><rect x="91" y="376" width="3" height="1" fill="#808080"/><rect x="89" y="381" width="5" height="1" fill="#808080"/><rect x="91" y="387" width="3" height="1" fill="#808080"/><rect x="91" y="393" width="3" height="1" fill="#808080"/><rect x="91" y="398" width="3" height="1" fill="#808080"/><rect x="91" y="404" width="3" height="1" fill="#808080"/><rect x="78" y="410" width="16" height="1" fill="#808080"/><rect x="91" y="415" width="3" height="1" fill="#808080"/><rect x="91" y="421" width="3" height="1" fill="#808080"/><rect x="91" y="427" width="3" height="1" fill="#808080"/><rect x="91" y="432" width="3" height="1" fill="#808080"/><rect x="89" y="438" width="5" height="1" fill="#808080"/><rect x="91" y="444" width="3" height="1" fill="#808080"/><rect x="91" y="449" width="3" height="1" fill="#808080"/><rect x="91" y="455" width="3" height="1" fill="#808080"/><rect x="91" y="461" width="3" height="1" fill="#808080"/><rect x="78" y="467" width="16" height="1" fill="#808080"/><rect x="91" y="472" width="3" height="1" fill="#808080"/><rect x="91" y="478" width="3" height="1" fill="#808080"/><rect x="91" y="484" width="3" height="1" fill="#808080"/><rect x="91" y="489" width="3" height="1" fill="#808080"/><rect x="89" y="495" width="5" height="1" fill="#808080"/><rect x="91" y="501" width="3" height="1" fill="#808080"/><rect x="91" y="506" width="3" height="1" fill="#808080"/><rect x="91" y="512" width="3" height="1" fill="#808080"/><rect x="91" y="518" width="3" height="1" fill="#808080"/><rect x="78" y="523" width="16" height="1" fill="#808080"/><rect x="91" y="529" width="3" height="1" fill="#808080"/><rect x="91" y="535" width="3" height="1" fill="#808080"/><rect x="91" y="540" width="3" height="1" fill="#808080"/><rect x="91" y="546" width="3" height="1" fill="#808080"/><rect x="89" y="552" width="5" height="1" fill="#808080"/><rect x="91" y="557" width="3" height="1" fill="#808080"/><rect x="91" y="563" width="3" height="1" fill="#808080"/><rect x="91" y="569" width="3" height="1" fill="#808080"/><rect x="91" y="574" width="3" height="1" fill="#808080"/><rect x="78" y="580" width="16" height="1" fill="#808080"/><rect x="91" y="586" width="3" height="1" fill="#808080"/><rect x="91" y="591" width="3" height="1" fill="#808080"/><rect x="91" y="597" width="3" height="1" fill="#808080"/><rect x="91" y="603" width="3" height="1" fill="#808080"/><rect x="89" y="608" width="5" height="1" fill="#808080"/><rect x="91" y="614" width="3" height="1" fill="#808080"/><rect x="91" y="620" width="3" height="1" fill="#808080"/><rect x="91" y="625" width="3" height="1" fill="#808080"/><rect x="91" y="631" width="3" height="1" fill="#808080"/><rect x="78" y="637" width="16" height="1" fill="#808080"/><rect x="91" y="642" width="3" height="1" fill="#808080"/><rect x="91" y="648" width="3" height="1" fill="#808080"/><rect x="91" y="654" width="3" height="1" fill="#808080"/><rect x="91" y="659" width="3" height="1" fill="#808080"/><rect x="89" y="665" width="5" height="1" fill="#808080"/><rect x="91" y="671" width="3" height="1" fill="#808080"/><rect x="91" y="676" width="3" height="1" fill="#808080"/><rect x="91" y="682" width="3" height="1" fill="#808080"/><rect x="91" y="688" width="3" height="1" fill="#808080"/><rect x="78" y="693" width="16" height="1" fill="#808080"/><rect x="91" y="699" width="3" height="1" fill="#808080"/><rect x="91" y="705" width="3" height="1" fill="#808080"/></svg>
<div style="position:absolute;left:0;top:0;width:94px;height:707px;overflow:hidden;">
<div class="t" style="left:81px;top:130px;color:#b8b8b8;font-size:10px;line-height:10px;">2</div>
<div class="t" style="left:81px;top:187px;color:#b8b8b8;font-size:10px;line-height:10px;">0</div>
<div class="t" style="left:81px;top:244px;color:#b8b8b8;font-size:10px;line-height:10px;">2</div>
<div class="t" style="left:81px;top:300px;color:#b8b8b8;font-size:10px;line-height:10px;">4</div>
<div class="t" style="left:81px;top:357px;color:#b8b8b8;font-size:10px;line-height:10px;">6</div>
<div class="t" style="left:81px;top:414px;color:#b8b8b8;font-size:10px;line-height:10px;">8</div>
<div class="t" style="left:81px;top:471px;color:#b8b8b8;font-size:10px;line-height:10px;">1<br>0</div>
<div class="t" style="left:81px;top:527px;color:#b8b8b8;font-size:10px;line-height:10px;">1<br>2</div>
<div class="t" style="left:81px;top:584px;color:#b8b8b8;font-size:10px;line-height:10px;">1<br>4</div>
<div class="t" style="left:81px;top:641px;color:#b8b8b8;font-size:10px;line-height:10px;">1<br>6</div>
<div class="t" style="left:81px;top:697px;color:#b8b8b8;font-size:10px;line-height:10px;">1<br>8</div>
</div>
<div style="position:absolute;left:79px;top:342px;width:1px;height:1px;background:#e0e0e0;"></div>
<div style="position:absolute;left:81px;top:342px;width:1px;height:1px;background:#e0e0e0;"></div>
<div style="position:absolute;left:83px;top:342px;width:1px;height:1px;background:#e0e0e0;"></div>
<div style="position:absolute;left:85px;top:342px;width:1px;height:1px;background:#e0e0e0;"></div>
<div style="position:absolute;left:87px;top:342px;width:1px;height:1px;background:#e0e0e0;"></div>
<div style="position:absolute;left:89px;top:342px;width:1px;height:1px;background:#e0e0e0;"></div>
<div style="position:absolute;left:91px;top:342px;width:1px;height:1px;background:#e0e0e0;"></div>
<div style="position:absolute;left:93px;top:342px;width:1px;height:1px;background:#e0e0e0;"></div>
<svg style="position:absolute;left:0px;top:0px;" width="700" height="640" viewBox="0 0 700 640"><rect x="247.4" y="236.4" width="306.2" height="81.80000000000003" rx="10.3" fill="#f9a61f" stroke="#3d3d3d" stroke-width="4.8"/><rect x="247.4" y="370.4" width="306.2" height="81.80000000000003" rx="0" fill="#f9a61f" stroke="#3d3d3d" stroke-width="4.8"/><rect x="247.4" y="503.4" width="306.2" height="81.80000000000003" rx="10.3" fill="#f9a61f" stroke="#3d3d3d" stroke-width="4.8"/><circle cx="247.4" cy="370.2" r="19.3" fill="none" stroke="#f4383b" stroke-width="3"/><circle cx="554.9" cy="372.2" r="20" fill="none" stroke="#f4383b" stroke-width="3"/><circle cx="245.8" cy="453.3" r="15.7" fill="none" stroke="#f4383b" stroke-width="3"/><circle cx="555.1" cy="453.5" r="17.7" fill="none" stroke="#f4383b" stroke-width="3"/></svg>
<div style="position:absolute;left:78px;top:708px;width:48px;height:15px;background:#4a4a4a;border:1px solid #5c5c5c;border-right:none;box-sizing:border-box;"></div>
<div class="t" style="left:88px;top:708px;color:#f0f0f0;"><span style="font-size:11px">100%</span></div>
<div style="position:absolute;left:126px;top:707px;width:184px;height:16px;background:#535353;"></div>
<div class="t" style="left:160px;top:708px;color:#e6e6e6;">文档<span style="font-size:11px">:754.2K/0</span> 字节</div>
<svg style="position:absolute;left:298px;top:711px;" width="6" height="9" viewBox="0 0 6 9"><path d="M1 0.5 L5 4.5 L1 8.5" fill="none" stroke="#c8c8c8" stroke-width="1"/></svg>
<div style="position:absolute;left:705px;top:707px;width:16px;height:16px;background:#505050;"></div>
<div style="position:absolute;left:723px;top:66px;width:374px;height:658px;background:#3a3a3a;"></div>
<div style="position:absolute;left:724px;top:67px;width:372px;height:11px;background:#424242;"></div>
<div style="position:absolute;left:724px;top:79px;width:37px;height:644px;background:#535353;"></div>
<div style="position:absolute;left:764px;top:79px;width:332px;height:644px;background:#535353;"></div>
<div style="position:absolute;left:722px;top:67px;width:1px;height:656px;background:#474747;"></div>
<div style="position:absolute;left:762px;top:79px;width:1px;height:644px;background:#474747;"></div>
<div style="position:absolute;left:76px;top:67px;width:1px;height:656px;background:#4a4a4a;"></div>
<svg style="position:absolute;left:747px;top:70px;" width="9" height="6" viewBox="0 0 9 6"><path d="M3.8 0.2 L0.4 3 L3.8 5.8 L2.6 3 Z M7.6 0.2 L4.2 3 L7.6 5.8 L6.4 3 Z" fill="#d8d8d8"/></svg>
<svg style="position:absolute;left:1082px;top:70px;" width="9" height="6" viewBox="0 0 9 6"><path d="M0.4 0.2 L3.8 3 L0.4 5.8 L1.6 3 Z M4.2 0.2 L7.6 3 L4.2 5.8 L5.4 3 Z" fill="#d8d8d8"/></svg>
<div style="position:absolute;left:733px;top:82px;width:1px;height:4px;background:#3c3c3c;"></div>
<div style="position:absolute;left:735px;top:82px;width:1px;height:4px;background:#3c3c3c;"></div>
<div style="position:absolute;left:737px;top:82px;width:1px;height:4px;background:#3c3c3c;"></div>
<div style="position:absolute;left:739px;top:82px;width:1px;height:4px;background:#3c3c3c;"></div>
<div style="position:absolute;left:741px;top:82px;width:1px;height:4px;background:#3c3c3c;"></div>
<div style="position:absolute;left:743px;top:82px;width:1px;height:4px;background:#3c3c3c;"></div>
<div style="position:absolute;left:745px;top:82px;width:1px;height:4px;background:#3c3c3c;"></div>
<div style="position:absolute;left:747px;top:82px;width:1px;height:4px;background:#3c3c3c;"></div>
<div style="position:absolute;left:749px;top:82px;width:1px;height:4px;background:#3c3c3c;"></div>
<div style="position:absolute;left:751px;top:82px;width:1px;height:4px;background:#3c3c3c;"></div>
<div style="position:absolute;left:737px;top:94px;width:5px;height:5px;background:#e6e6e6;"></div>
<div style="position:absolute;left:738px;top:95px;width:3px;height:3px;background:#454545;"></div>
<div style="position:absolute;left:737px;top:100px;width:5px;height:5px;background:#e6e6e6;"></div>
<div style="position:absolute;left:738px;top:101px;width:3px;height:3px;background:#454545;"></div>
<div style="position:absolute;left:737px;top:106px;width:5px;height:5px;background:#e6e6e6;"></div>
<svg style="position:absolute;left:0;top:0" width="760" height="120"><path d="M744.8 94.8 L751 95.2 L744.8 100.6 Z" fill="#e6e6e6"/><path d="M747.5 98 C752 100.5 752.2 106.5 745.8 109.8 C749.3 106.3 749.6 101.6 746.6 99.6 Z" fill="#e6e6e6"/></svg>
<svg style="position:absolute;left:737px;top:123px;" width="16" height="16" viewBox="0 0 16 16"><path d="M1 1 L15 8 L1 15 Z" fill="#e2e2e2"/></svg>
<div style="position:absolute;left:724px;top:147px;width:37px;height:1px;background:#3a3a3a;"></div>
<div style="position:absolute;left:733px;top:151px;width:1px;height:4px;background:#3c3c3c;"></div>
<div style="position:absolute;left:735px;top:151px;width:1px;height:4px;background:#3c3c3c;"></div>
<div style="position:absolute;left:737px;top:151px;width:1px;height:4px;background:#3c3c3c;"></div>
<div style="position:absolute;left:739px;top:151px;width:1px;height:4px;background:#3c3c3c;"></div>
<div style="position:absolute;left:741px;top:151px;width:1px;height:4px;background:#3c3c3c;"></div>
<div style="position:absolute;left:743px;top:151px;width:1px;height:4px;background:#3c3c3c;"></div>
<div style="position:absolute;left:745px;top:151px;width:1px;height:4px;background:#3c3c3c;"></div>
<div style="position:absolute;left:747px;top:151px;width:1px;height:4px;background:#3c3c3c;"></div>
<div style="position:absolute;left:749px;top:151px;width:1px;height:4px;background:#3c3c3c;"></div>
<div style="position:absolute;left:751px;top:151px;width:1px;height:4px;background:#3c3c3c;"></div>
<svg style="position:absolute;left:733px;top:161px;" width="21" height="21" viewBox="0 0 21 21"><circle cx="10.5" cy="10.5" r="5.5" fill="none" stroke="#e2e2e2" stroke-width="1.3"/><path d="M10.5 1 V20 M1 10.5 H20 M3.8 3.8 L17.2 17.2 M17.2 3.8 L3.8 17.2" stroke="#e2e2e2" stroke-width="1.3"/><circle cx="10.5" cy="10.5" r="1.5" fill="#e2e2e2"/></svg>
<svg style="position:absolute;left:0;top:0" width="760" height="210"><rect x="734" y="198" width="1" height="7" fill="#e6e6e6"/><rect x="735" y="201.5" width="1" height="3.5" fill="#e6e6e6"/><rect x="736" y="196" width="1" height="9" fill="#e6e6e6"/><rect x="737" y="200" width="1" height="5" fill="#e6e6e6"/><rect x="738" y="201.5" width="1" height="3.5" fill="#e6e6e6"/><rect x="739" y="199.5" width="1" height="5.5" fill="#e6e6e6"/><rect x="740" y="195" width="1" height="10" fill="#e6e6e6"/><rect x="741" y="199.5" width="1" height="5.5" fill="#e6e6e6"/><rect x="742" y="197" width="1" height="8" fill="#e6e6e6"/><rect x="743" y="194" width="1" height="11" fill="#e6e6e6"/><rect x="744" y="197" width="1" height="8" fill="#e6e6e6"/><rect x="745" y="199.5" width="1" height="5.5" fill="#e6e6e6"/><rect x="746" y="198" width="1" height="7" fill="#e6e6e6"/><rect x="747" y="195" width="1" height="10" fill="#e6e6e6"/><rect x="748" y="200.5" width="1" height="4.5" fill="#e6e6e6"/><rect x="749" y="199" width="1" height="6" fill="#e6e6e6"/><rect x="750" y="201" width="1" height="4" fill="#e6e6e6"/><rect x="751" y="197" width="1" height="8" fill="#e6e6e6"/></svg>
<div style="position:absolute;left:724px;top:216px;width:37px;height:1px;background:#3a3a3a;"></div>
<div style="position:absolute;left:764px;top:79px;width:332px;height:28px;background:#424242;"></div>
<div style="position:absolute;left:804px;top:79px;width:1px;height:27px;background:#3a3a3a;"></div>
<div class="t" style="left:774px;top:87px;color:#bdbdbd;">图层</div>
<div style="position:absolute;left:840px;top:79px;width:1px;height:27px;background:#3a3a3a;"></div>
<div class="t" style="left:813px;top:87px;color:#bdbdbd;">库</div>
<div style="position:absolute;left:880px;top:79px;width:1px;height:27px;background:#3a3a3a;"></div>
<div class="t" style="left:850px;top:87px;color:#bdbdbd;">调整</div>
<div style="position:absolute;left:881px;top:79px;width:41px;height:28px;background:#535353;"></div>
<div class="t" style="left:890px;top:87px;color:#f4f4f4;">属性</div>
<div style="position:absolute;left:961px;top:79px;width:1px;height:27px;background:#3a3a3a;"></div>
<div class="t" style="left:931px;top:87px;color:#bdbdbd;">通道</div>
<div style="position:absolute;left:1001px;top:79px;width:1px;height:27px;background:#3a3a3a;"></div>
<div class="t" style="left:972px;top:87px;color:#bdbdbd;">路径</div>
<div style="position:absolute;left:1044px;top:79px;width:1px;height:27px;background:#3a3a3a;"></div>
<div class="t" style="left:1012px;top:87px;color:#bdbdbd;">段落</div>
<div style="position:absolute;left:764px;top:106px;width:117px;height:1px;background:#3a3a3a;"></div>
<div style="position:absolute;left:922px;top:106px;width:174px;height:1px;background:#3a3a3a;"></div>
<div style="position:absolute;left:1080px;top:89px;width:10px;height:1px;background:#d4d4d4;"></div>
<div style="position:absolute;left:1080px;top:91px;width:10px;height:1px;background:#d4d4d4;"></div>
<div style="position:absolute;left:1080px;top:93px;width:10px;height:1px;background:#d4d4d4;"></div>
<div style="position:absolute;left:1080px;top:95px;width:10px;height:1px;background:#d4d4d4;"></div>
<div style="position:absolute;left:775px;top:113px;width:22px;height:22px;background:#393939;border-radius:3px;border:1px solid #444;box-sizing:border-box;"></div>
<svg style="position:absolute;left:777px;top:114px;" width="16" height="16" viewBox="0 0 16 16"><rect x="3.5" y="3.5" width="9.3" height="9.5" fill="none" stroke="#e2e2e2" stroke-width="1.2"/><g fill="#393939" stroke="#e2e2e2" stroke-width="1"><circle cx="3.5" cy="3.5" r="1.5"/><circle cx="12.8" cy="3.5" r="1.5"/><circle cx="3.5" cy="13" r="1.5"/><circle cx="12.8" cy="13" r="1.5"/></g></svg>
<div style="position:absolute;left:801px;top:117px;width:18px;height:14px;background:#dcdcdc;"></div>
<svg style="position:absolute;left:801px;top:117px;" width="18" height="14" viewBox="0 0 18 14"><ellipse cx="9" cy="7" rx="4" ry="3.6" fill="#535353"/></svg>
<div class="t" style="left:828px;top:118px;color:#e6e6e6;">实时形状属性</div>
<div style="position:absolute;left:764px;top:140px;width:332px;height:1px;background:#3a3a3a;"></div>
<div style="position:absolute;left:1081px;top:141px;width:15px;height:557px;background:#4a4a4a;"></div>
<div class="t" style="left:775px;top:155px;color:#cfcfcf;">W:</div>
<div style="position:absolute;left:794px;top:152px;width:56px;height:19px;background:#454545;border:1px solid #5e5e5e;box-sizing:border-box;overflow:hidden;"><div class="t" style="left:1px;top:2px;color:#f2f2f2;"><span style="font-size:11px">305.89</span> 像素</div></div>
<svg style="position:absolute;left:858px;top:156px;" width="16" height="9" viewBox="0 0 16 9"><path d="M6.92 3.2 A3.2 3.2 0 1 0 6.92 5.8 M9.08 3.2 A3.2 3.2 0 1 1 9.08 5.8" fill="none" stroke="#d8d8d8" stroke-width="1.2"/><path d="M5 4.5 H11" stroke="#d8d8d8" stroke-width="1.2"/></svg>
<div class="t" style="left:887px;top:155px;color:#cfcfcf;">H:</div>
<div style="position:absolute;left:904px;top:152px;width:55px;height:19px;background:#454545;border:1px solid #5e5e5e;box-sizing:border-box;overflow:hidden;"><div class="t" style="left:1px;top:2px;color:#f2f2f2;"><span style="font-size:11px">81.9</span> 像素</div></div>
<div class="t" style="left:779px;top:182px;color:#cfcfcf;">X:</div>
<div style="position:absolute;left:794px;top:179px;width:57px;height:19px;background:#454545;border:1px solid #5e5e5e;box-sizing:border-box;overflow:hidden;"><div class="t" style="left:1px;top:2px;color:#f2f2f2;"><span style="font-size:11px">131.05</span> 像素</div></div>
<div class="t" style="left:889px;top:182px;color:#cfcfcf;">Y:</div>
<div style="position:absolute;left:904px;top:179px;width:56px;height:19px;background:#454545;border:1px solid #5e5e5e;box-sizing:border-box;overflow:hidden;"><div class="t" style="left:1px;top:2px;color:#f2f2f2;"><span style="font-size:11px">187.04</span> 像素</div></div>
<div style="position:absolute;left:764px;top:202px;width:317px;height:1px;background:#3a3a3a;"></div>
<div style="position:absolute;left:771px;top:208px;width:30px;height:20px;border:1px solid #8a8a8a;background:#454545;box-sizing:border-box;"></div>
<div style="position:absolute;left:774px;top:211px;width:24px;height:14px;background:#f9a61f;"></div>
<div style="position:absolute;left:805px;top:208px;width:30px;height:20px;border:1px solid #8a8a8a;background:#535353;box-sizing:border-box;"></div>
<div style="position:absolute;left:808px;top:211px;width:24px;height:14px;background:#3c3c3c;"></div>
<div style="position:absolute;left:812px;top:215px;width:16px;height:6px;border:1px solid #f0f0f0;background:#4a4a4a;box-sizing:border-box;"></div>
<div style="position:absolute;left:840px;top:208px;width:81px;height:21px;background:#454545;border:1px solid #626262;border-radius:3px;box-sizing:border-box;"></div>
<div class="t" style="left:842px;top:213px;color:#f2f2f2;"><span style="font-size:11px">5</span> 像素</div>
<div style="position:absolute;left:905px;top:209px;width:1px;height:19px;background:#626262;"></div>
<svg style="position:absolute;left:908px;top:216px;" width="9" height="6" viewBox="0 0 9 6"><path d="M0.5 0.5 L4 4 L7.5 0.5" fill="none" stroke="#c8c8c8" stroke-width="1"/></svg>
<div style="position:absolute;left:926px;top:208px;width:34px;height:21px;background:#454545;border:1px solid #626262;border-radius:3px;box-sizing:border-box;"></div>
<div style="position:absolute;left:930px;top:217px;width:14px;height:2px;background:#f0f0f0;"></div>
<svg style="position:absolute;left:948px;top:216px;" width="9" height="6" viewBox="0 0 9 6"><path d="M0.5 0.5 L4 4 L7.5 0.5" fill="none" stroke="#c8c8c8" stroke-width="1"/></svg>
<div style="position:absolute;left:771px;top:233px;width:64px;height:20px;background:#454545;border:1px solid #626262;border-radius:3px;box-sizing:border-box;"></div>
<svg style="position:absolute;left:780px;top:237px;" width="14" height="14" viewBox="0 0 14 14"><rect x="0" y="0" width="14" height="14" fill="#e6e6e6"/><rect x="2.5" y="2.5" width="9" height="9" fill="none" stroke="#111" stroke-width="1"/><rect x="5" y="5" width="4" height="4" fill="#555"/><g fill="#111"><circle cx="2.5" cy="2.5" r="1.2"/><circle cx="11.5" cy="2.5" r="1.2"/><circle cx="2.5" cy="11.5" r="1.2"/><circle cx="11.5" cy="11.5" r="1.2"/></g></svg>
<svg style="position:absolute;left:824px;top:242px;" width="9" height="6" viewBox="0 0 9 6"><path d="M0.5 0.5 L4 4 L7.5 0.5" fill="none" stroke="#c8c8c8" stroke-width="1"/></svg>
<div style="position:absolute;left:840px;top:233px;width:65px;height:20px;background:#454545;border:1px solid #626262;border-radius:3px;box-sizing:border-box;"></div>
<svg style="position:absolute;left:848px;top:238px;" width="13" height="12" viewBox="0 0 13 12"><path d="M6 0 H12.5 V12 H6 C2.7 12 0 9.3 0 6 C0 2.7 2.7 0 6 0 Z" fill="#e6e6e6"/><rect x="5" y="5" width="7.5" height="2" fill="#111"/><rect x="4" y="4.3" width="2.8" height="3.3" fill="#111"/></svg>
<svg style="position:absolute;left:893px;top:242px;" width="9" height="6" viewBox="0 0 9 6"><path d="M0.5 0.5 L4 4 L7.5 0.5" fill="none" stroke="#c8c8c8" stroke-width="1"/></svg>
<div style="position:absolute;left:910px;top:233px;width:50px;height:20px;background:#454545;border:1px solid #626262;border-radius:3px;box-sizing:border-box;"></div>
<svg style="position:absolute;left:918px;top:238px;" width="14" height="13" viewBox="0 0 14 13"><path d="M0.5 0 H12.5 V7 H8 V12.5 H0.5 Z" fill="#e6e6e6"/><path d="M5 5.2 H12.5 M5.5 5.2 V12.5" stroke="#111" stroke-width="1.1"/><rect x="4" y="4" width="2.5" height="2.5" fill="#111"/></svg>
<svg style="position:absolute;left:948px;top:242px;" width="9" height="6" viewBox="0 0 9 6"><path d="M0.5 0.5 L4 4 L7.5 0.5" fill="none" stroke="#c8c8c8" stroke-width="1"/></svg>
<div style="position:absolute;left:764px;top:258px;width:317px;height:1px;background:#3a3a3a;"></div>
<div style="position:absolute;left:790px;top:264px;width:170px;height:19px;background:#454545;border:1px solid #5e5e5e;box-sizing:border-box;overflow:hidden;"><div class="t" style="left:0px;top:2px;color:#f2f2f2;"><span style="font-size:11px">0</span>像素<span style="font-size:11px">0</span>像素<span style="font-size:11px">0</span>像素<span style="font-size:11px">0</span>像素</div></div>
<div style="position:absolute;left:762px;top:282px;width:209px;height:88px;border:3px solid #fa3a3a;box-sizing:border-box;"></div>
<svg style="position:absolute;left:774px;top:290px;" width="14" height="14" viewBox="0 0 14 14"><path d="M0.6 13.4 V5.1 A4.5 4.5 0 0 1 5.1 0.6 H13.4 V13.4 Z" fill="none" stroke="#e4e4e4" stroke-width="1.2"/></svg>
<div style="position:absolute;left:795px;top:287px;width:68px;height:19px;background:#454545;border:1px solid #5e5e5e;box-sizing:border-box;overflow:hidden;"><div class="t" style="left:1px;top:2px;color:#f2f2f2;"><span style="font-size:11px">0</span> 像素</div></div>
<div style="position:absolute;left:867px;top:287px;width:68px;height:19px;background:#454545;border:1px solid #5e5e5e;box-sizing:border-box;overflow:hidden;"><div class="t" style="left:1px;top:2px;color:#f2f2f2;"><span style="font-size:11px">0</span> 像素</div></div>
<svg style="position:absolute;left:942px;top:290px;" width="14" height="14" viewBox="0 0 14 14"><path d="M0.6 0.6 H8.9 A4.5 4.5 0 0 1 13.4 5.1 V13.4 H0.6 Z" fill="none" stroke="#e4e4e4" stroke-width="1.2"/></svg>
<div style="position:absolute;left:852px;top:311px;width:26px;height:27px;background:#393939;border:1px solid #5a5a5a;border-radius:3px;box-sizing:border-box;"></div>
<svg style="position:absolute;left:857px;top:319px;" width="16" height="9" viewBox="0 0 16 9"><path d="M6.92 3.2 A3.2 3.2 0 1 0 6.92 5.8 M9.08 3.2 A3.2 3.2 0 1 1 9.08 5.8" fill="none" stroke="#d8d8d8" stroke-width="1.2"/><path d="M5 4.5 H11" stroke="#d8d8d8" stroke-width="1.2"/></svg>
<svg style="position:absolute;left:774px;top:345px;" width="14" height="14" viewBox="0 0 14 14"><path d="M0.6 0.6 H13.4 V13.4 H5.1 A4.5 4.5 0 0 1 0.6 8.9 Z" fill="none" stroke="#e4e4e4" stroke-width="1.2"/></svg>
<div style="position:absolute;left:795px;top:342px;width:68px;height:19px;background:#454545;border:1px solid #5e5e5e;box-sizing:border-box;overflow:hidden;"><div class="t" style="left:1px;top:2px;color:#f2f2f2;"><span style="font-size:11px">0</span> 像素</div></div>
<div style="position:absolute;left:867px;top:342px;width:68px;height:19px;background:#454545;border:1px solid #5e5e5e;box-sizing:border-box;overflow:hidden;"><div class="t" style="left:1px;top:2px;color:#f2f2f2;"><span style="font-size:11px">0</span> 像素</div></div>
<svg style="position:absolute;left:942px;top:345px;" width="14" height="14" viewBox="0 0 14 14"><path d="M0.6 0.6 H13.4 V8.9 A4.5 4.5 0 0 1 8.9 13.4 H0.6 Z" fill="none" stroke="#e4e4e4" stroke-width="1.2"/></svg>
<div style="position:absolute;left:971px;top:366px;width:110px;height:1px;background:#3a3a3a;"></div>
<div style="position:absolute;left:800px;top:372px;width:132px;height:24px;background:#454545;border:1px solid #5a5a5a;box-sizing:border-box;"></div>
<div style="position:absolute;left:801px;top:373px;width:31px;height:22px;background:#383838;"></div>
<div style="position:absolute;left:832px;top:373px;width:1px;height:22px;background:#5a5a5a;"></div>
<div style="position:absolute;left:865px;top:373px;width:1px;height:22px;background:#5a5a5a;"></div>
<div style="position:absolute;left:898px;top:373px;width:1px;height:22px;background:#5a5a5a;"></div>
<svg style="position:absolute;left:0px;top:0px;" width="940" height="400" viewBox="0 0 940 400"><rect x="808.7" y="376.9" width="10.2" height="10.1" rx="1.3" fill="#dedede"/><rect x="812.6" y="381.2" width="10.3" height="10" rx="1.3" fill="#dedede"/><rect x="842.8" y="376.9" width="10" height="10" rx="1" fill="#dedede"/><rect x="846.4" y="382" width="8.6" height="8.8" rx="1" fill="#454545" stroke="#dedede" stroke-width="1.3"/><rect x="879.6" y="382" width="5.6" height="4.6" fill="#dedede"/><rect x="875.4" y="377.4" width="9.6" height="9.4" rx="1" fill="none" stroke="#dedede" stroke-width="1.2"/><rect x="879.6" y="381.8" width="9.4" height="9.2" rx="1" fill="none" stroke="#dedede" stroke-width="1.2"/><rect x="908" y="376.9" width="10" height="10" rx="1.2" fill="#dedede"/><rect x="912" y="381.2" width="10" height="10" rx="1.2" fill="#dedede"/><rect x="912" y="381.2" width="6" height="5.7" fill="#454545"/></svg>
</body></html>
